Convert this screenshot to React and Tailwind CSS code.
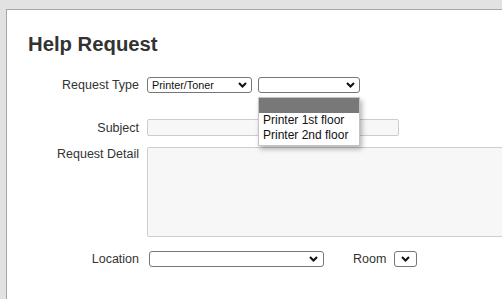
import React from "react";

function Chevron() {
  return (
    <svg width="9" height="6" viewBox="0 0 9 6" className="shrink-0">
      <path d="M1 1l3.5 3.5L8 1" fill="none" stroke="#111" strokeWidth="2" />
    </svg>
  );
}

function FakeSelect({ value, className = "" }) {
  return (
    <div
      className={`flex h-[16px] items-center justify-between rounded-[3px] border border-[#767676] bg-white pl-[4px] pr-[4px] text-[10.8px] leading-none text-[#111] ${className}`}
    >
      <span>{value}</span>
      <Chevron />
    </div>
  );
}

export default function App() {
  return (
    <div className="h-[299px] w-[502px] overflow-hidden bg-[#e2e2e2] pl-[6px] pt-[9px] font-['Liberation_Sans',Arial,sans-serif]">
      <div className="h-[400px] w-[600px] border-l border-t border-[#a6a6a6] bg-white pt-[23px]">
        <h1 className="pl-[21px] text-[20.3px] font-bold leading-[23px] text-[#333]">
          Help Request
        </h1>

        <div className="mt-[21px] flex flex-col text-[12.5px] leading-[16px] text-[#333]">
          {/* request type */}
          <div className="flex items-center">
            <label className="w-[132px] text-right">Request Type</label>
            <div className="ml-[8px] flex gap-[6px]">
              <FakeSelect value="Printer/Toner" className="w-[105px]" />
              <div className="relative">
                <FakeSelect value="" className="w-[102px]" />
                <div className="absolute left-0 top-[20px] z-10 w-[102px] border border-[#c4c4c4] bg-white pb-[2px] text-[12px] leading-[15px] text-[#111] shadow-[2px_3px_5px_rgba(0,0,0,0.3)]">
                  <div className="h-[15px] bg-[#787878]" />
                  <div className="pl-[4px]">Printer 1st floor</div>
                  <div className="pl-[4px]">Printer 2nd floor</div>
                </div>
              </div>
            </div>
          </div>

          {/* subject */}
          <div className="mt-[26px] flex items-center">
            <label className="w-[132px] text-right">Subject</label>
            <div className="ml-[8px] h-[17px] w-[252px] rounded-[2px] border border-[#cdcdcd] bg-[#f7f7f7]" />
          </div>

          {/* detail */}
          <div className="mt-[11px] flex items-start">
            <label className="w-[132px] text-right leading-[14px]">Request Detail</label>
            <div className="ml-[8px] h-[90px] w-[400px] rounded-[2px] border border-[#cdcdcd] bg-[#f7f7f7]" />
          </div>

          {/* location / room */}
          <div className="mt-[14px] flex items-center">
            <label className="w-[132px] text-right">Location</label>
            <FakeSelect value="" className="ml-[10px] w-[175px] pr-[5px]" />
            <label className="ml-[29px]">Room</label>
            <FakeSelect value="" className="ml-[8px] w-[23px] justify-center !pl-0 !pr-0" />
          </div>
        </div>
      </div>
    </div>
  );
}
